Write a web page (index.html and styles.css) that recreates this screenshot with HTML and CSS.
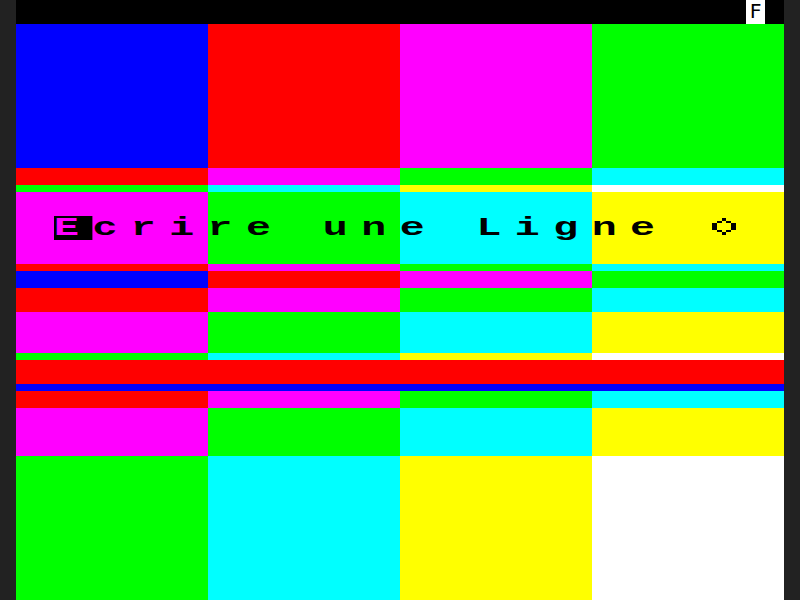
FILE: index.html
```html
<!DOCTYPE html>
<html lang="fr">
<head>
<meta charset="utf-8">
<title>Minitel</title>
<link rel="stylesheet" href="styles.css">
</head>
<body>
<div class="screen">
  <div class="status">
    <span class="status-flag">F</span>
  </div>
  <div class="band h144"><div class="blue"></div><div class="red"></div><div class="magenta"></div><div class="green"></div></div>
  <div class="band h17"><div class="red"></div><div class="magenta"></div><div class="green"></div><div class="cyan"></div></div>
  <div class="band h7"><div class="green"></div><div class="cyan"></div><div class="yellow"></div><div class="white"></div></div>
  <div class="band h72 title-band">
    <div class="magenta"></div><div class="green"></div><div class="cyan"></div><div class="yellow"></div>
    <div class="title"><span class="title-text"><span class="inv">E</span>crire une Ligne </span><svg class="diamond" viewBox="0 0 24 17" width="24" height="17"><rect x="10" y="0" width="4" height="3"/><rect x="5" y="3" width="5" height="2"/><rect x="14" y="3" width="5" height="2"/><rect x="0" y="5" width="5" height="7"/><rect x="19" y="5" width="5" height="7"/><rect x="5" y="12" width="5" height="2"/><rect x="14" y="12" width="5" height="2"/><rect x="10" y="14" width="4" height="3"/></svg></div>
  </div>
  <div class="band h7"><div class="red"></div><div class="magenta"></div><div class="green"></div><div class="cyan"></div></div>
  <div class="band h17"><div class="blue"></div><div class="red"></div><div class="magenta"></div><div class="green"></div></div>
  <div class="band h24"><div class="red"></div><div class="magenta"></div><div class="green"></div><div class="cyan"></div></div>
  <div class="band h41"><div class="magenta"></div><div class="green"></div><div class="cyan"></div><div class="yellow"></div></div>
  <div class="band h7"><div class="green"></div><div class="cyan"></div><div class="yellow"></div><div class="white"></div></div>
  <div class="full h24 red"></div>
  <div class="full h7 blue"></div>
  <div class="band h17"><div class="red"></div><div class="magenta"></div><div class="green"></div><div class="cyan"></div></div>
  <div class="band h48"><div class="magenta"></div><div class="green"></div><div class="cyan"></div><div class="yellow"></div></div>
  <div class="band h144"><div class="green"></div><div class="cyan"></div><div class="yellow"></div><div class="white"></div></div>
</div>
</body>
</html>
```
FILE: styles.css
```css
html, body {
  margin: 0;
  padding: 0;
  background: #222222;
  height: 600px;
  overflow: hidden;
}
.screen {
  width: 768px;
  margin: 0 16px;
  display: flex;
  flex-direction: column;
}
.status {
  height: 24px;
  background: #000;
  display: flex;
  justify-content: flex-end;
  padding-right: 19px;
}
.status-flag {
  width: 19px;
  height: 24px;
  background: #fff;
  color: #000;
  font-family: "DejaVu Sans Mono", monospace;
  font-size: 20px;
  line-height: 22px;
  text-align: center;
}
.band {
  display: grid;
  grid-template-columns: repeat(4, 192px);
}
.h144 { height: 144px; }
.h72 { height: 72px; }
.h48 { height: 48px; }
.h41 { height: 41px; }
.h24 { height: 24px; }
.h17 { height: 17px; }
.h7 { height: 7px; }
.blue { background: #0000ff; }
.red { background: #ff0000; }
.magenta { background: #ff00ff; }
.green { background: #00ff00; }
.cyan { background: #00ffff; }
.yellow { background: #ffff00; }
.white { background: #ffffff; }
.title-band {
  position: relative;
}
.title {
  position: absolute;
  left: 38.4px;
  top: 24px;
  height: 24px;
  display: flex;
  align-items: flex-start;
}
.title-text {
  display: inline-block;
  font-family: "Liberation Mono", monospace;
  font-weight: bold;
  font-size: 26px;
  line-height: 24px;
  letter-spacing: 8.4px;
  color: #000;
  white-space: pre;
  transform: scaleX(1.6);
  transform-origin: left top;
  width: 384px;
}
.inv {
  display: inline-block;
  width: 24px;
  height: 24px;
  background: #000;
  color: #ff00ff;
}
.diamond {
  position: absolute;
  left: 658px;
  top: 2px;
  fill: #000;
}
```
